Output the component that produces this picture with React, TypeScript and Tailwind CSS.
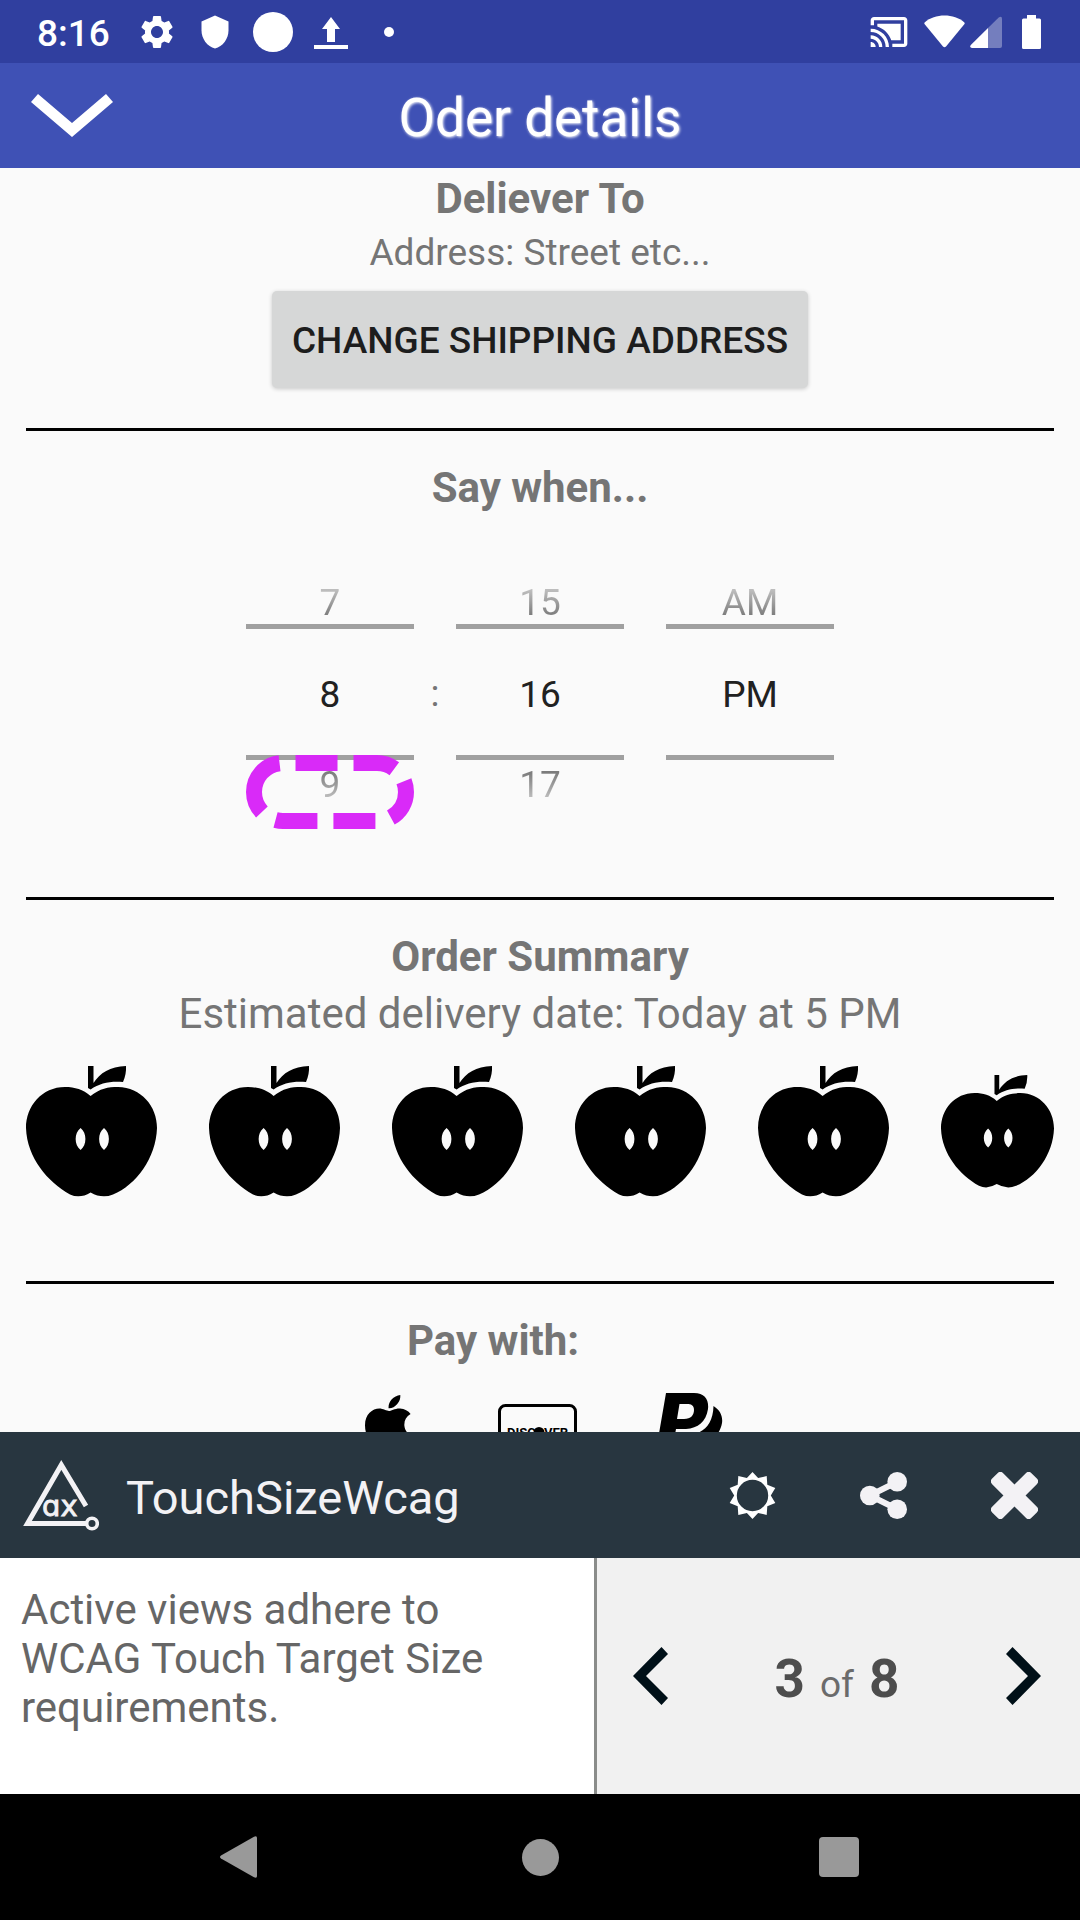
import React from "react";
import { MdSettings, MdShield, MdCastConnected } from "react-icons/md";

function StatusBar() {
  return (
    <div className="flex h-[63px] shrink-0 items-center justify-between bg-[#303f9f] pl-[37px] pr-[39px] text-white">
      <div className="flex items-center gap-[18px]">
        <span className="mr-[9px] pt-[3px] text-[37px] leading-[43px] font-medium">8:16</span>
        <MdSettings className="size-10" />
        <span className="flex w-10 justify-center">
          <MdShield className="size-9" />
        </span>
        <span className="size-10 rounded-full bg-white" />
        <svg className="size-10" viewBox="0 0 40 40" fill="currentColor" aria-hidden="true">
          <path d="M20 5 29 17H24V30H16V17H11Z" />
          <rect x="3" y="33" width="34" height="4" />
        </svg>
        <span className="flex w-10 justify-center">
          <span className="size-[10px] rounded-full bg-white" />
        </span>
      </div>
      <div className="flex items-center">
        <MdCastConnected className="mr-[15px] size-10" />
        <svg className="mr-[5px] h-[34px] w-[41px]" viewBox="0 0 41 34" fill="currentColor" aria-hidden="true">
          <path d="M.6 7.4C6 2.9 13 .6 20.500 .6S35 2.900 40.400 7.400Q41 8 40.500 8.900L22 31.500Q20.500 33 19 31.500L.5 8.900Q0 8 .6 7.400Z" />
        </svg>
        <svg className="mr-[20px] h-[32px] w-[32px]" viewBox="0 0 32 32" fill="currentColor" aria-hidden="true">
          <path d="M18 12 28.700 1.500Q32 -.5 32 3V30Q32 32 30 32H18Z" opacity=".33" />
          <path d="M18 12V32H2Q-.8 31.500 .8 29Z" />
        </svg>
        <svg className="h-[34px] w-[19px]" viewBox="0 0 19 34" fill="currentColor" aria-hidden="true">
          <path d="M5 0H14V3.500H17.500Q19 3.500 19 5V32.500Q19 34 17.500 34H1.500Q0 34 0 32.500V5Q0 3.500 1.500 3.500H5Z" />
        </svg>
      </div>
    </div>
  );
}

function AppBar() {
  return (
    <header className="grid h-[105px] shrink-0 grid-cols-[1fr_auto_1fr] items-center bg-[#3f51b5] text-white">
      <button aria-label="Collapse" className="w-fit pl-[31px]">
        <svg className="h-[43px] w-[82px]" viewBox="0 0 82 43" fill="currentColor" aria-hidden="true">
          <path d="M7 0 41 29 75 0 82 8 41 43 0 8Z" />
        </svg>
      </button>
      <h1 className="pt-1 text-[53px] leading-[62px] font-normal [text-shadow:1px_1px_3px_#fff]">Oder details</h1>
    </header>
  );
}

function Heading({ children }: { children: React.ReactNode }) {
  return <h2 className="text-[42px] leading-[49px] font-bold">{children}</h2>;
}

function Wheel({
  label,
  previous,
  value,
  next,
  highlighted,
}: {
  label: string;
  previous: string;
  value: string;
  next?: string;
  highlighted?: boolean;
}) {
  return (
    <div className="flex w-[168px] flex-col text-[37px] leading-[42px]">
      <button className="bg-linear-to-b from-[#bdbdbd] from-20% to-[#7c7c7c] to-80% bg-clip-text text-transparent">{previous}</button>
      <div className="h-[5px] bg-[#a0a0a0]" />
      <input aria-label={label} defaultValue={value} className="h-[126px] w-full bg-transparent pt-1 text-center text-[#212121] outline-none" />
      <div className="h-[5px] bg-[#a0a0a0]" />
      {next && (
        <div className="relative mt-1 flex flex-col">
          <button className="bg-linear-to-b from-[#7c7c7c] from-20% to-[#bdbdbd] to-80% bg-clip-text text-transparent">{next}</button>
          {highlighted && (
            <svg className="pointer-events-none absolute -top-[9px] left-0 h-[74px] w-full" viewBox="0 0 168 74" fill="none" aria-hidden="true">
              <path
                d="M8 37A29 29 0 0 1 37 8H131A29 29 0 0 1 131 66H37A29 29 0 0 1 8 37"
                stroke="#d826f8"
                strokeOpacity=".98"
                strokeWidth="16"
                strokeDasharray="42 16"
              />
            </svg>
          )}
        </div>
      )}
    </div>
  );
}

function Apple({ small }: { small?: boolean }) {
  return (
    <svg className={small ? "size-[113px]" : "size-[131px]"} viewBox="0 0 131 131" role="img" aria-label="Apple">
      <path d="M62 0H67.500V17C74 7 84 .5 100 0Q100.500 8 97 16C84 15 74 17 64.600 23.500L62 22Z" />
      <path
        fillRule="evenodd"
        d="M64.600 30C74 22.500 82 21 92 21C115 21.500 131 40 131 62C130 92 110 119 87 128.500Q76 133 64.600 126.500Q54 133 44 128.500C22 116 1 92 0 62C0 40 16 21 39 21C49 21 57 23.500 64.600 30ZM54.600 62C48 67 48 79 54.600 84C61 79 61 67 54.600 62ZM78 62C71.500 67 71.500 79 78 84C84.500 79 84.500 67 78 62Z"
      />
    </svg>
  );
}

function PaymentRow() {
  return (
    <div className="mt-7 flex justify-center gap-[79px] pr-[6px] text-black">
      <button aria-label="Apple Pay">
        <svg className="size-[79px]" viewBox="-196 16 632 632" fill="currentColor" aria-hidden="true">
          <path d="M318.700 268.700c-.2-36.700 16.400-64.400 50-84.800-18.800-26.900-47.200-41.700-84.700-44.600-35.500-2.800-74.300 20.700-88.500 20.700-15 0-49.400-19.700-76.400-19.700C63.300 141.200 4 184.800 4 273.500q0 39.300 14.400 81.200c12.800 36.700 59 126.700 107.200 125.200 25.200-.6 43-17.900 75.800-17.900 31.800 0 48.300 17.900 76.400 17.900 48.600-.7 90.400-82.500 102.600-119.300-65.200-30.700-61.700-90-61.700-91.900zm-56.600-164.200c27.300-32.400 24.800-61.900 24-72.500-24.100 1.400-52 16.400-67.900 34.900-17.500 19.800-27.800 44.300-25.600 71.900 26.100 2 49.900-11.400 69.500-34.200z" />
        </svg>
      </button>
      <button aria-label="Discover">
        <svg className="size-[79px]" viewBox="0 0 79 79" aria-hidden="true">
          <rect x="1.500" y="12.500" width="76" height="54" rx="6" fill="none" stroke="currentColor" strokeWidth="3" />
          <text x="9" y="44" fontSize="13" fontWeight="700">DISC</text>
          <circle cx="41" cy="39.500" r="5.500" />
          <text x="46" y="44" fontSize="13" fontWeight="700">VER</text>
        </svg>
      </button>
      <button aria-label="PayPal">
        <svg className="size-[79px]" viewBox="0 0 79 79" fill="currentColor" aria-hidden="true">
          <path fillRule="evenodd" d="M10 0H38C49 0 53 7 52 16C50 29 42 35 30 36H20L16 58H0ZM23.500 11 21 26H28C35 26 38 22 38 17C38 12 35 11 31 11Z" />
          <path d="M57.500 13C64 17 67 23 66 30C64 42 55 49 43 50H36L33 68H18L23 42H32C46 41 57 33 57.500 13Z" />
        </svg>
      </button>
    </div>
  );
}

function Content() {
  return (
    <main className="min-h-0 flex-1 overflow-hidden bg-[#fafafa] px-[26px] pt-[6px] text-center text-[#757575]">
      <section className="border-b-[3px] border-black pb-10">
        <Heading>Deliever To</Heading>
        <p className="mt-2 text-[37px] leading-[43px]">Address: Street etc...</p>
        <button className="mx-auto mt-[17px] block h-[97px] rounded-[5px] bg-[#d6d7d7] px-5 pt-[2px] text-[37px] leading-[43px] font-medium text-[#1d1d1d] shadow-[0_1px_4px_rgba(0,0,0,0.2)]">
          CHANGE SHIPPING ADDRESS
        </button>
      </section>
      <section className="border-b-[3px] border-black pt-8 pb-[91px]">
        <Heading>Say when...</Heading>
        <div className="mt-[70px] flex justify-center">
          <Wheel label="Hour" previous="7" value="8" next="9" highlighted />
          <span className="flex w-[42px] items-center justify-center text-[37px] leading-[42px]">:</span>
          <Wheel label="Minute" previous="15" value="16" next="17" />
          <span className="w-[42px]" />
          <Wheel label="AM or PM" previous="AM" value="PM" />
        </div>
      </section>
      <section className="border-b-[3px] border-black pt-8 pb-[84px]">
        <Heading>Order Summary</Heading>
        <p className="mt-2 text-[42px] leading-[49px]">Estimated delivery date: Today at 5 PM</p>
        <div className="mt-7 flex items-center justify-between">
          <Apple />
          <Apple />
          <Apple />
          <Apple />
          <Apple />
          <Apple small />
        </div>
      </section>
      <section className="pt-8">
        <div className="pr-[94px]">
          <Heading>Pay with:</Heading>
        </div>
        <PaymentRow />
      </section>
    </main>
  );
}

function Inspector() {
  return (
    <aside className="shrink-0">
      <div className="flex h-[126px] items-center bg-[#283640] pl-[23px] text-[#f3f2f5]">
        <svg className="h-[71px] w-[76px]" viewBox="0 0 76 71" fill="none" stroke="currentColor" aria-hidden="true">
          <path d="M63 46 38.300 5 4.500 63.500H63" strokeWidth="5" />
          <circle cx="69" cy="63.500" r="5.300" strokeWidth="3.600" />
          <text x="19" y="56" fontSize="29" fill="currentColor" strokeWidth=".8" fontFamily="'DejaVu Sans', sans-serif">
            ɑx
          </text>
        </svg>
        <h2 className="flex-1 pt-[5px] pl-[27px] text-[47px] leading-[56px] font-normal">TouchSizeWcag</h2>
        <button aria-label="Brightness" className="flex h-full w-[131px] items-center justify-center text-white">
          <svg className="size-[47px]" viewBox="-23.500 -23.500 47 47" fill="currentColor" aria-hidden="true">
            <path
              fillRule="evenodd"
              d="M0-23.500 5.600-17.400 14.200-19.500 14.800-10.800 22.800-7.400 18.300 0 22.800 7.400 14.800 10.800 14.200 19.500 5.600 17.400 0 23.500-5.600 17.400-14.200 19.500-14.800 10.800-22.800 7.400-18.300 0-22.800-7.400-14.800-10.800-14.200-19.500-5.600-17.400ZM0-15.700A15.700 15.700 0 1 0 0 15.700A15.700 15.700 0 1 0 0-15.700Z"
            />
          </svg>
        </button>
        <button aria-label="Share" className="flex h-full w-[131px] items-center justify-center">
          <svg className="size-[47px]" viewBox="0 0 47 47" fill="currentColor" aria-hidden="true">
            <path d="M37 10 9.700 23.500 37 37" fill="none" stroke="currentColor" strokeWidth="6" />
            <circle cx="37.200" cy="9.800" r="9.800" />
            <circle cx="9.800" cy="23.500" r="9.800" />
            <circle cx="37.200" cy="37.200" r="9.800" />
          </svg>
        </button>
        <button aria-label="Close" className="flex h-full w-[131px] items-center justify-center">
          <svg className="size-[47px]" viewBox="-23.500 -23.500 47 47" fill="currentColor" aria-hidden="true">
            <rect x="-27.800" y="-7.800" width="55.600" height="15.600" rx="4" transform="rotate(45)" />
            <rect x="-27.800" y="-7.800" width="55.600" height="15.600" rx="4" transform="rotate(-45)" />
          </svg>
        </button>
      </div>
      <div className="flex h-[236px]">
        <p className="w-[55%] bg-white pt-[27px] pr-[60px] pl-[21px] text-[42px] leading-[49px] text-[#666]">
          Active views adhere to WCAG Touch Target Size requirements.
        </p>
        <div className="flex flex-1 items-center justify-between border-l-[3px] border-[#8a8c8a] bg-[#f1f1f1] pr-[39px] pl-[36px] text-[#001018]">
          <button aria-label="Previous">
            <svg className="h-[58px] w-[35px]" viewBox="0 0 35 58" fill="currentColor" aria-hidden="true">
              <path d="M28.500 0 35 7 13 29 35 51 28.500 58 0 29Z" />
            </svg>
          </button>
          <p className="flex items-baseline gap-[15px] pt-3 text-[53px] leading-[62px] font-bold text-[#4d4d4d]">
            <span>3</span>
            <span className="text-[37px] font-normal text-[#6b6b6b]">of</span>
            <span>8</span>
          </p>
          <button aria-label="Next">
            <svg className="h-[58px] w-[35px]" viewBox="0 0 35 58" fill="currentColor" aria-hidden="true">
              <path d="M6.500 0 35 29 6.500 58 0 51 22 29 0 7Z" />
            </svg>
          </button>
        </div>
      </div>
    </aside>
  );
}

function NavigationBar() {
  return (
    <nav className="flex h-[126px] shrink-0 items-center justify-center bg-black text-[#999]">
      <button aria-label="Back" className="flex w-[299px] justify-center">
        <svg className="size-[42px]" viewBox="0 0 42 42" fill="currentColor" aria-hidden="true">
          <path d="M1 19.500 34 .8Q37 -.5 37 2V40Q37 42.500 34 41.200L1 22.500Q-1 21 1 19.500Z" />
        </svg>
      </button>
      <button aria-label="Home" className="flex w-[299px] justify-center">
        <span className="size-[37px] rounded-full bg-[#999]" />
      </button>
      <button aria-label="Recent apps" className="flex w-[299px] justify-center">
        <span className="size-10 rounded-[4px] bg-[#999]" />
      </button>
    </nav>
  );
}

export default function App() {
  return (
    <div className="flex h-screen flex-col font-[Roboto,sans-serif]">
      <StatusBar />
      <AppBar />
      <Content />
      <Inspector />
      <NavigationBar />
    </div>
  );
}
